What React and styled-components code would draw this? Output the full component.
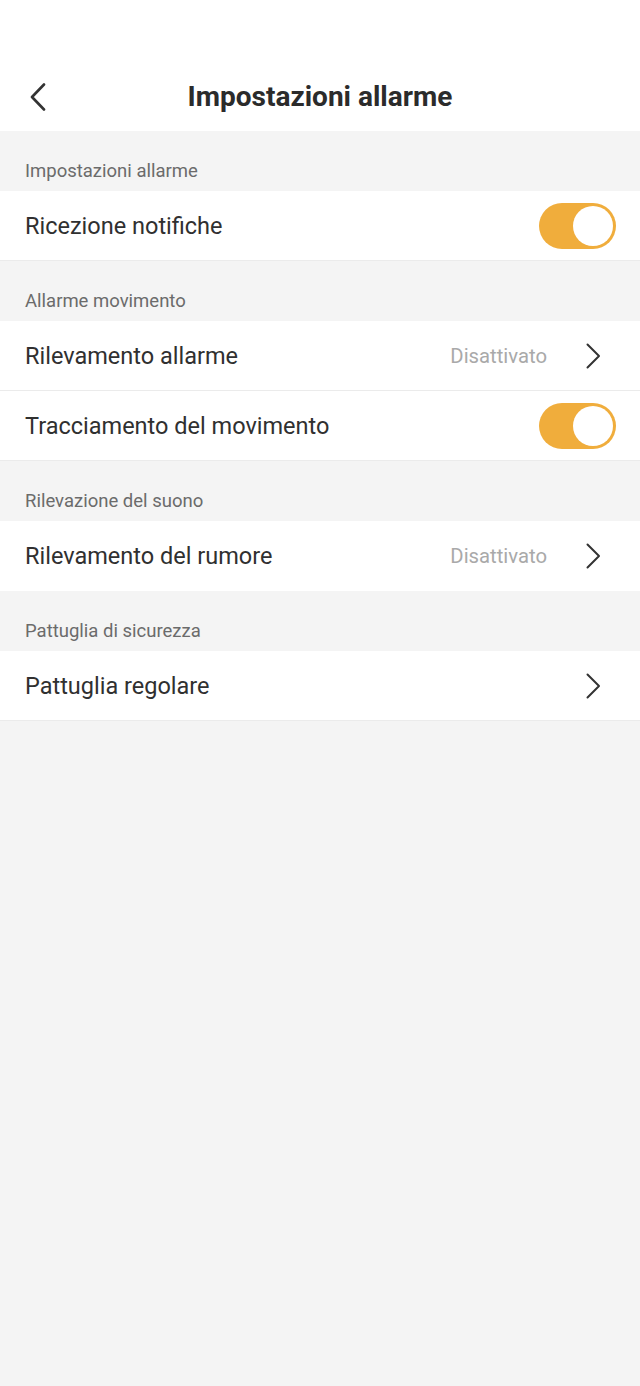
import React from "react";
import styled, { createGlobalStyle } from "styled-components";

const Global = createGlobalStyle`
  html, body { margin: 0; padding: 0; background: #f4f4f4; }
  body { font-family: Roboto, "Noto Sans", "Liberation Sans", sans-serif; -webkit-font-smoothing: antialiased; }
  * { box-sizing: border-box; }
`;

const Page = styled.div`
  min-height: 1386px;
  width: 640px;
  background: #f4f4f4;
`;

const Header = styled.header`
  height: 131px;
  background: #fff;
  padding-top: 62px;
  display: grid;
  grid-template-columns: 76px 1fr 76px;
  align-items: center;
`;

const BackButton = styled.button`
  border: 0;
  background: none;
  padding: 0 0 0 29px;
  height: 66px;
  display: flex;
  align-items: center;
  cursor: pointer;
`;

const Title = styled.h1`
  margin: 0;
  text-align: center;
  font-size: 28px;
  font-weight: 700;
  color: #2b2b2b;
  letter-spacing: 0;
`;

const SectionLabel = styled.div`
  height: 60px;
  padding: 29px 25px 0;
  font-size: 18.5px;
  color: #6b6b6b;
  line-height: 22px;
`;

const Group = styled.div`
  background: #fff;
`;

const Row = styled.div`
  height: 70px;
  display: flex;
  align-items: center;
  padding: 0 25px;
  border-bottom: ${(p) => (p.$divider ? "1px solid #ebebeb" : "none")};
`;

const RowLabel = styled.span`
  flex: 1;
  font-size: 23.5px;
  color: #303030;
`;

const Value = styled.span`
  font-size: 20.3px;
  color: #a9a9a9;
  margin-right: 38px;
`;

const Switch = styled.div`
  width: 77px;
  height: 46px;
  border-radius: 23px;
  background: #f0ad3c;
  position: relative;
  margin-right: -1px;
`;

const Knob = styled.div`
  position: absolute;
  top: 3px;
  right: 3px;
  width: 40px;
  height: 40px;
  border-radius: 50%;
  background: #fff;
`;

const Chevron = ({ dir = "right" }) =>
  dir === "right" ? (
    <svg width="16" height="26" viewBox="0 0 16 26" style={{ marginRight: 14 }}>
      <path d="M2.5 1.5 L14 13 L2.5 24.5" fill="none" stroke="#333" strokeWidth="2" strokeLinecap="round" strokeLinejoin="round" />
    </svg>
  ) : (
    <svg width="18" height="28" viewBox="0 0 18 28">
      <path d="M15 1.5 L3 14 L15 26.5" fill="none" stroke="#333" strokeWidth="2.6" strokeLinecap="round" strokeLinejoin="round" />
    </svg>
  );

const Toggle = () => (
  <Switch>
    <Knob />
  </Switch>
);

const sections = [
  {
    label: "Impostazioni allarme",
    rows: [{ text: "Ricezione notifiche", toggle: true }],
    divider: true,
  },
  {
    label: "Allarme movimento",
    rows: [
      { text: "Rilevamento allarme", value: "Disattivato" },
      { text: "Tracciamento del movimento", toggle: true },
    ],
    divider: true,
  },
  {
    label: "Rilevazione del suono",
    rows: [{ text: "Rilevamento del rumore", value: "Disattivato" }],
    divider: false,
  },
  {
    label: "Pattuglia di sicurezza",
    rows: [{ text: "Pattuglia regolare", arrow: true }],
    divider: true,
  },
];

export default function App() {
  return (
    <Page>
      <Global />
      <Header>
        <BackButton aria-label="Indietro">
          <Chevron dir="left" />
        </BackButton>
        <Title>Impostazioni allarme</Title>
        <span />
      </Header>
      {sections.map((s) => (
        <section key={s.label}>
          <SectionLabel>{s.label}</SectionLabel>
          <Group>
            {s.rows.map((r, i) => (
              <Row key={r.text} $divider={i < s.rows.length - 1 || s.divider}>
                <RowLabel>{r.text}</RowLabel>
                {r.value && <Value>{r.value}</Value>}
                {r.toggle ? <Toggle /> : <Chevron />}
              </Row>
            ))}
          </Group>
        </section>
      ))}
    </Page>
  );
}
